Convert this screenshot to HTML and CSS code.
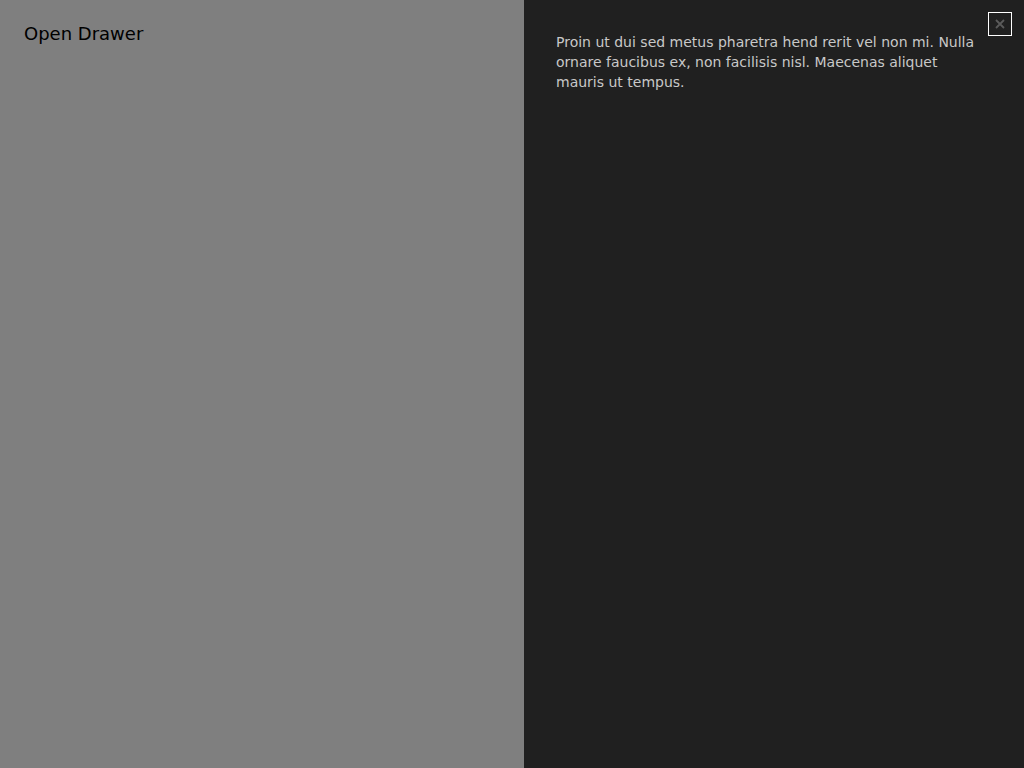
FILE: index.html
```html
<!DOCTYPE html>
<html>
<head>
<meta charset="utf-8">
<link rel="stylesheet" href="styles.css">
</head>
<body>
<main class="page">
  <button class="open-btn">Open Drawer</button>
</main>
<div class="overlay"></div>
<aside class="drawer">
  <button class="close-btn" aria-label="Close">
    <svg width="12" height="12" viewBox="0 0 12 12"><path d="M2 2L10 10M10 2L2 10" stroke="#5a5a5a" stroke-width="1.8" fill="none"/></svg>
  </button>
  <p class="drawer-text">Proin ut dui sed metus pharetra hend rerit vel non mi. Nulla ornare faucibus ex, non facilisis nisl. Maecenas aliquet mauris ut tempus.</p>
</aside>
</body>
</html>
```
FILE: styles.css
```css
html, body {
  margin: 0;
  height: 100%;
  background: #ffffff;
  font-family: "DejaVu Sans", sans-serif;
}
.page {
  padding: 24px;
}
.open-btn {
  background: none;
  border: none;
  padding: 0;
  font-family: "DejaVu Sans", sans-serif;
  font-size: 18px;
  line-height: 20px;
  color: #000;
  cursor: pointer;
}
.overlay {
  position: fixed;
  inset: 0;
  background: rgba(0, 0, 0, 0.5);
}
.drawer {
  position: fixed;
  top: 0;
  right: 0;
  bottom: 0;
  width: 500px;
  background: #202020;
  box-sizing: border-box;
  padding: 32px 48px 32px 32px;
}
.close-btn {
  position: absolute;
  top: 12px;
  right: 12px;
  width: 24px;
  height: 24px;
  box-sizing: border-box;
  border: 1px solid #ffffff;
  background: transparent;
  padding: 0;
  display: flex;
  align-items: center;
  justify-content: center;
}
.drawer-text {
  margin: 0;
  font-size: 14px;
  line-height: 20px;
  color: #c8c8c8;
}
```
